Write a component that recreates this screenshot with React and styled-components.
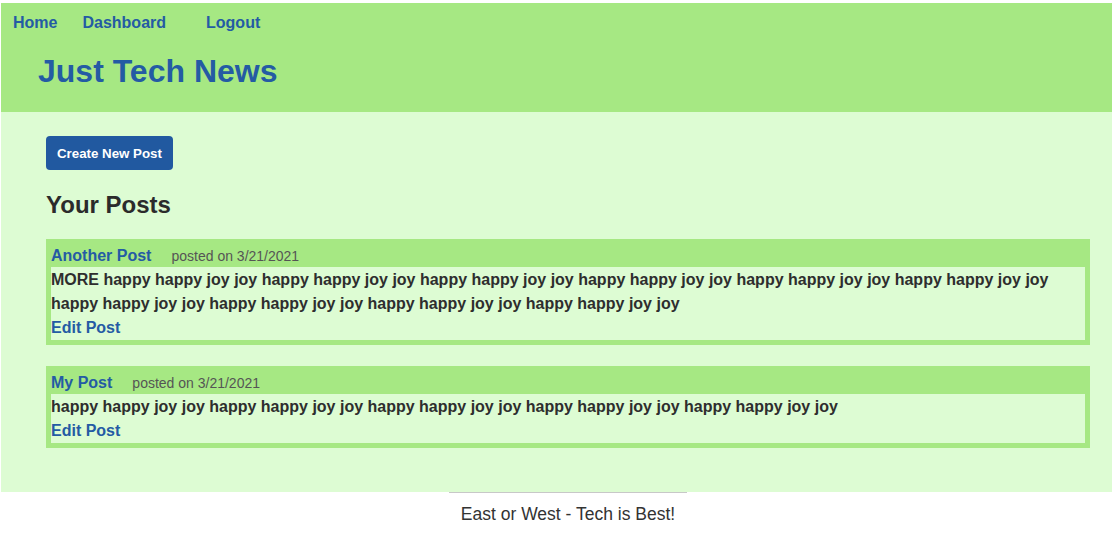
import React from "react";
import styled, { createGlobalStyle } from "styled-components";

const GlobalStyle = createGlobalStyle`
  html, body {
    margin: 0;
    padding: 0;
    background: #ffffff;
    font-family: "Liberation Sans", Arial, sans-serif;
  }
`;

const Page = styled.div`
  padding: 3px 0 0 1px;
`;

const Header = styled.header`
  background-color: #a6e883;
  padding: 11px 12px 23px;
`;

const Nav = styled.nav`
  display: flex;
  line-height: 18px;
`;

const NavLink = styled.a`
  color: #245ba4;
  font-weight: bold;
  font-size: 16px;
  text-decoration: none;
  margin-left: ${(p) => p.gap || 0}px;
`;

const Title = styled.h1`
  margin: 21px 0 0 25px;
  font-size: 32px;
  line-height: 36px;
  color: #245ba4;
`;

const Main = styled.main`
  background-color: #ddfcd3;
  padding: 24px 22px 44px 45px;
`;

const Button = styled.button`
  display: block;
  height: 34px;
  padding: 0 11px;
  border: none;
  border-radius: 4px;
  background-color: #2159a0;
  color: #ffffff;
  font-family: "Liberation Sans", Arial, sans-serif;
  font-weight: bold;
  font-size: 13.3px;
`;

const Heading = styled.h2`
  margin: 21px 0 20px;
  font-size: 24px;
  line-height: 28px;
  color: #2b2b2b;
`;

const PostList = styled.div`
  display: flex;
  flex-direction: column;
  gap: 21px;
`;

const Card = styled.article`
  background-color: #a6e883;
  padding: 0 5px 5px;
`;

const CardHead = styled.div`
  display: flex;
  align-items: baseline;
  gap: 20px;
  height: 28px;
  padding-top: 5px;
  box-sizing: border-box;
  line-height: 23px;
`;

const PostTitle = styled.a`
  color: #245ba4;
  font-weight: bold;
  font-size: 16px;
  text-decoration: none;
`;

const Meta = styled.span`
  color: #555;
  font-size: 14px;
`;

const CardBody = styled.div`
  background-color: #ddfcd3;
  font-size: 16px;
  line-height: 24px;
  font-weight: bold;
  color: #2e2e2e;
  padding-top: 1px;
`;

const EditLink = styled.a`
  display: block;
  color: #245ba4;
  text-decoration: none;
`;

const Footer = styled.footer`
  display: flex;
  flex-direction: column;
  align-items: center;
  padding-left: 23px;
`;

const Rule = styled.div`
  width: 238px;
  border-top: 1px solid #c8c8c8;
`;

const FooterText = styled.p`
  margin: 9px 0 0;
  font-size: 17.5px;
  line-height: 24px;
  color: #333;
`;

const posts = [
  {
    title: "Another Post",
    date: "3/21/2021",
    text:
      "MORE happy happy joy joy happy happy joy joy happy happy joy joy happy happy joy joy happy happy joy joy happy happy joy joy happy happy joy joy happy happy joy joy happy happy joy joy happy happy joy joy",
  },
  {
    title: "My Post",
    date: "3/21/2021",
    text: "happy happy joy joy happy happy joy joy happy happy joy joy happy happy joy joy happy happy joy joy",
  },
];

export default function App() {
  return (
    <Page>
      <GlobalStyle />
      <Header>
        <Nav>
          <NavLink href="#">Home</NavLink>
          <NavLink href="#" gap={25}>Dashboard</NavLink>
          <NavLink href="#" gap={40}>Logout</NavLink>
        </Nav>
        <Title>Just Tech News</Title>
      </Header>
      <Main>
        <Button>Create New Post</Button>
        <Heading>Your Posts</Heading>
        <PostList>
          {posts.map((post) => (
            <Card key={post.title}>
              <CardHead>
                <PostTitle href="#">{post.title}</PostTitle>
                <Meta>posted on {post.date}</Meta>
              </CardHead>
              <CardBody>
                {post.text}
                <EditLink href="#">Edit Post</EditLink>
              </CardBody>
            </Card>
          ))}
        </PostList>
      </Main>
      <Footer>
        <Rule />
        <FooterText>East or West - Tech is Best!</FooterText>
      </Footer>
    </Page>
  );
}
